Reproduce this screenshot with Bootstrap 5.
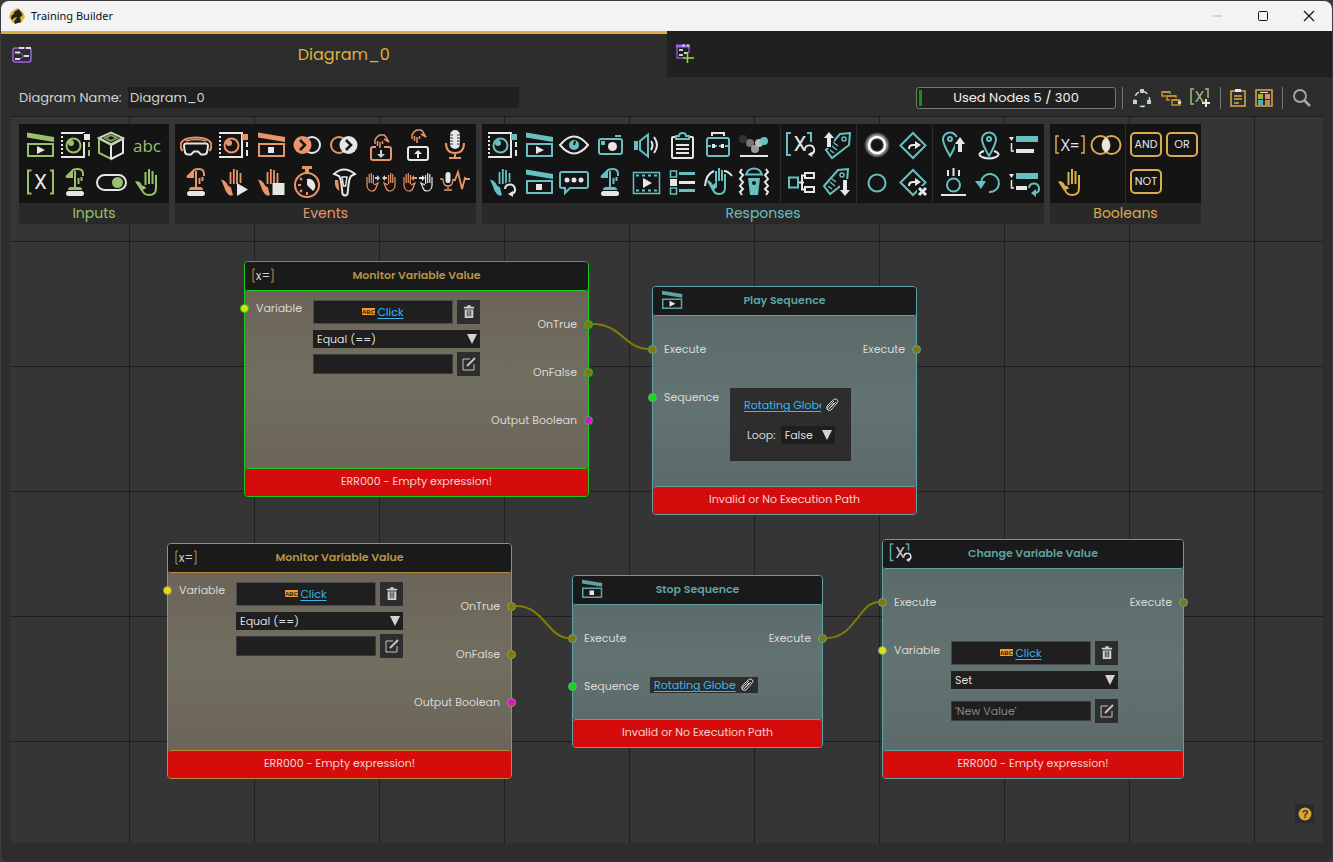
<!DOCTYPE html>
<html lang="en" data-bs-theme="dark">
<head>
<meta charset="utf-8">
<meta name="viewport" content="width=device-width, initial-scale=1">
<title>Training Builder</title>
<link href="https://cdn.jsdelivr.net/npm/bootstrap@5.3.0/dist/css/bootstrap.min.css" rel="stylesheet">
<style>
:root{--ink:#e6e6e6;--green:#9ac06b;--orange:#e9956a;--teal:#67bfc1;--gold:#d9ab4c}
body{font-family:Poppins,Inter,sans-serif;font-size:11px;line-height:16px;color:#d2d2d2;background:#3c3a3d}
.app-window{min-height:100vh;padding:1px 1px 0}
.title-bar{height:30px;background:#f3f3f3;color:#111;border-radius:8px 8px 0 0;font:11px/30px "Noto Sans","Open Sans",sans-serif}
.title-bar .app-name{margin-left:6px}
.title-bar button{width:46px;height:30px;background:none;border:0;padding:0;display:grid;place-items:center}
.work{background:#2d2d2d;border-radius:0 0 8px 8px}
.tab-strip{height:46px;background:#202020}
.tab-on{width:50%;background:#2d2d2d;border:0;border-top:3px solid #dfb13a;color:#dfb13a;font-size:16px;padding:0 11px 2px}
.bare{background:none;border:0;padding:0;color:inherit;line-height:0}
.tool-bar{height:39px;padding:2px 20px 0 18px}
.tool-bar label{font-size:13px;width:109px}
.name-box{width:391px;height:21px;background:#202020;border:0;color:#d2d2d2;font-size:13px;padding:0 2px}
.meter{width:200px;height:22px;background:#202020;border:1px solid #777;border-radius:3px;padding:2px;font-size:13px;line-height:16px;color:#f2f2f2}
.meter .bar{height:16px;background:#0a9a0a}
.meter .cap{position:absolute;inset:2px 0}
.tool-icons{gap:9px;margin-left:6px}
.rule{width:1px;height:22px;background:#777}
.canvas{margin:0 9px 19px;min-height:727px;padding:8px 9px;background-color:#353535;
 background-image:linear-gradient(#1f1f1f 1px,transparent 1px),linear-gradient(90deg,#1f1f1f 1px,transparent 1px);
 background-size:125px 125px;background-position:0 0,119px 0}
.palette{background:#292929;font-size:14px;line-height:21px}
.palette-row{gap:6px}
.groups{background:#141414}
.set{display:grid;grid-auto-flow:column;grid-template-rows:37px 37px;grid-auto-columns:36px;padding:2px 1px 3px 2px;height:79px}
.set + .set{border-left:1px solid #2c2c2c}
.set.roomy{grid-auto-columns:37px;padding-right:3px}
.set.long{padding-right:8px}
.set.four{width:150px}
.set button{display:grid;place-items:center}
.set svg{width:32px;height:32px}
.c-green{color:var(--green)}.c-orange{color:var(--orange)}.c-teal{color:var(--teal)}.c-gold{color:var(--gold)}
svg{overflow:visible}
symbol,.ic{fill:none;stroke-width:2}
.a{stroke:currentColor}.af{fill:currentColor;stroke:none}
.w{stroke:var(--ink)}.wf{fill:var(--ink);stroke:none}
.gate{width:32px;height:25px;border:2px solid var(--gold);border-radius:5px;color:var(--ink);font-size:11px;line-height:21px;text-align:center}
.node{position:absolute;border:1px solid var(--edge);border-radius:4px;--edge:#5ea3a3;--face:#5e6e6df2;--face2:#657674f2;color:#d8d8d8}
.node.warm{--edge:#b38c40;--face:#6f675bf2;--face2:#747262f2}
.node.picked{--edge:#18c81b}
.node-head{height:29px;background:#1a1a1a;border-bottom:1px solid var(--edge);border-radius:3px;font-weight:600;color:#5ea3a3;padding:0 6px 2px}
.warm .node-head{color:#b9924a}
.node-head svg{width:24px;height:24px}
.node-head .ttl{margin-right:24px}
.node-body{background:linear-gradient(var(--face),var(--face2) 50%,var(--face))}
.node-err{height:28px;background:#d60c0c;border-top:1px solid var(--edge);border-radius:3px;line-height:25px;text-align:center;color:#efd3d0}
.port-in,.port-out{display:flex;align-items:center;gap:7px;height:48px;white-space:nowrap}
.port-in{margin-left:-5px}.port-out{margin-right:-5px;justify-content:flex-end}
.port-in i,.port-out i{width:9px;height:9px;border-radius:50%;border:1px solid var(--edge);background:var(--dot,#7d7a12);flex:none}
.ins{width:68px;padding-top:9px}.ins.wide{width:77px}.outs{padding-top:9px}
.warm .ins .port-in{height:16px}
.ctl{width:167px;padding-top:9px}
.ctl .pick{margin:6px 0 4px}
.ctl.low{padding-top:72px}
.ctl.low .pick{margin-bottom:10px}
.slot{height:24px;background:#1f1f1f;border:1px solid #4a4a4a;display:flex;align-items:center;justify-content:center;gap:2px}
.slot a,.ref a{color:#35b9ee;text-decoration:underline;text-underline-offset:2px}
.sq{width:23px;height:24px;background:#2d2d2d;border:0;padding:0;display:grid;place-items:center;flex:none}
.node .pick{height:18px;border:0;border-radius:0;background-color:#1f1f1f;color:#dedede;font-size:11px;line-height:18px;padding:0 18px 0 4px;background-position:right 3px center;background-size:10px 10px;
 background-image:url("data:image/svg+xml,%3csvg xmlns='http://www.w3.org/2000/svg' viewBox='0 0 10 10'%3e%3cpath d='M0 0h10L5 10z' fill='%23d2d2d2'/%3e%3c/svg%3e")}
.field{height:20px;background:#1f1f1f;border:1px solid #3a3a3a;color:#ddd;font-size:11px;padding:0 3px;min-width:0}
.field::placeholder{color:#868686;opacity:1}
.ref-wrap{margin-top:72px}
.ref{background:#2d2d2d}
.loop-card{width:121px;height:73px;padding:9px 0 0 14px}
.loop-row{margin:13px 0 0 3px;gap:5px}
.loop-row .pick{width:54px}
.clip-link{width:77px;overflow:hidden;white-space:nowrap;flex:none}
.help{position:absolute;right:9px;bottom:20px;width:19px;height:19px;background:#2a2a2a;display:grid;place-items:center}
</style>
</head>
<body>
<svg width="0" height="0" class="position-absolute" aria-hidden="true">
<symbol id="roof" viewBox="0 0 32 32"><path class="af" d="M4 3.500L31 8v5L4 8.500z"/><path class="a" d="M5 15h25v12H5z"/></symbol>
<symbol id="clapplay" viewBox="0 0 32 32"><use href="#roof"/><path class="wf" d="M14 17l8 4-8 4z"/></symbol>
<symbol id="clapstop" viewBox="0 0 32 32"><use href="#roof"/><path class="wf" d="M14 18h6v6h-6z"/></symbol>
<symbol id="safe" viewBox="0 0 32 32"><path class="w" d="M2 4h24M2 28h24M25 3v26"/><path class="w" stroke-dasharray="2 2" d="M3 3v26"/><circle class="a" cx="14.500" cy="16.500" r="7"/><circle class="af" cx="12" cy="14" r="3"/></symbol>
<symbol id="safe1" viewBox="0 0 32 32"><use href="#safe"/><path fill="#141414" d="M24 4h8v9h-8z"/><path class="wf" d="M25 5h6v6h-6z"/><path class="a" d="M30 13v5M30 21v6"/></symbol>
<symbol id="safe2" viewBox="0 0 32 32"><use href="#safe"/><path class="af" d="M25 5h6v6h-6z"/><path class="w" d="M30 13v5M30 21v6"/></symbol>
<symbol id="cube" viewBox="0 0 32 32"><path class="a" d="M16 17v13L4 24V9.500l12 6"/><path class="w" d="M16 30l12-6V9.500l-12 6.500v14"/><path d="M4 9l12-5.500L28 9l-12 6.500z" stroke="#c0d3a8"/><path d="M10 9l6-3 6 3-6 3z" stroke="#7f9c5c"/></symbol>
<symbol id="brk" viewBox="0 0 32 32"><path class="a" d="M8.500 4.500H5v23h3.500M27 4.500h3v23h-3"/></symbol>
<symbol id="press" viewBox="0 0 32 32"><path class="a" stroke-width="2" d="M7 11l7-7q2-1 5-1 5 0 5 5v2M7 11h6M16 5v16M19.500 12v6M22.500 11v4"/><path class="af" d="M8 11l6-7v8h-6z"/><path class="af" d="M9 24q0-3 3-3h8q3 0 3 3z"/><rect class="wf" x="7" y="25" width="18" height="5" rx="2.500"/></symbol>
<symbol id="toggle" viewBox="0 0 32 32"><rect class="w" x="2" y="9" width="29" height="15" rx="7.500"/><circle class="af" cx="22.500" cy="16.500" r="5.500"/></symbol>
<symbol id="hand" viewBox="0 0 32 32"><path class="a" d="M14.500 19V6M18 18V3M21.500 18V5M25 9v13q0 7-7 7-5 0-7-5l-5-8"/><path class="af" d="M4 15.500q5-1 7 4l3 1 1 2-5 2z"/></symbol>
<symbol id="fingers" viewBox="0 0 32 32"><path class="a" stroke-width="1.800" d="M13.500 18V6M16.800 18V3M20 18V4M23.500 17V7"/><path class="af" d="M4 13.500q5 1 7 6l3 2q1 4 2 8h-3q-4-2-6-9z"/></symbol>
<symbol id="handplay" viewBox="0 0 32 32"><use href="#fingers"/><path class="wf" d="M20 17l11 6.500L20 30z"/></symbol>
<symbol id="handstop" viewBox="0 0 32 32"><use href="#fingers"/><path class="wf" d="M18.500 17h12v12h-12z"/></symbol>
<symbol id="vr" viewBox="0 0 32 32"><path class="a" d="M2.500 22Q0 19 1 14q3-5.500 15-5.500T31 14q1 5-1.500 8"/><path class="a" stroke-width="1.500" d="M6 12q10-3 20 0"/><path class="w" d="M6 14.500h20q2 0 2 3l-1 6q-1 2-3 2h-3l-3-3h-4l-3 3H8q-2 0-3-2l-1-6q0-3 2-3z"/></symbol>
<symbol id="chev1" viewBox="0 0 32 32"><circle class="w" cx="21" cy="16" r="8"/><circle class="af" cx="11.500" cy="16" r="9"/><path d="M9 11l5 5-5 5" stroke="#141414" stroke-width="2.500"/></symbol>
<symbol id="chev2" viewBox="0 0 32 32"><circle class="a" cx="11" cy="16" r="8"/><circle class="wf" cx="20.500" cy="16" r="9"/><path d="M18 11l5 5-5 5" stroke="#141414" stroke-width="2.500"/></symbol>
<symbol id="pinch" viewBox="0 0 32 32"><path class="a" stroke-width="1.500" d="M10 13V9q2-4 5-5h4q2 1 3 4l2 3-5-3M12.500 10v5M15 11v6M17.500 10v3"/></symbol>
<symbol id="grab" viewBox="0 0 32 32"><rect class="a" x="6" y="18" width="20" height="13" rx="2"/><path fill="#141414" d="M11 16h8v4h-8z"/><use href="#pinch" y="2"/><path fill="#ccc" d="M15 21h2v4h3l-4 4-4-4h3z"/></symbol>
<symbol id="drop" viewBox="0 0 32 32"><use href="#pinch" y="-3"/><rect class="w" x="6" y="18" width="20" height="13" rx="2"/><path class="wf" d="M15 29h2v-4h3l-4-4-4 4h3z"/></symbol>
<symbol id="mic" viewBox="0 0 32 32"><rect class="wf" x="11" y="1" width="10" height="19" rx="5"/><path d="M11 6h3M18 6h3M11 9h3M18 9h3M11 12h3M18 12h3M11 15h3M18 15h3" stroke="#333" stroke-width="1"/><path class="a" d="M7 14q0 10 9 10t9-10M16 24v5M10 29h12"/></symbol>
<symbol id="timer" viewBox="0 0 32 32"><circle class="a" cx="16" cy="19" r="12"/><path class="af" d="M11 0h10v3h-3v4h-4V3h-3z"/><path class="wf" d="M16 13a7 7 0 0 1 6 12l-6-6z"/><path class="a" d="M16 29v-3M7 19h3M9 12l2 2M9 26l2-2"/></symbol>
<symbol id="bolt" viewBox="0 0 32 32"><path class="w" d="M6 8q10-9 21 0l-4 2q-2 3-2.500 9l-1 9q-2.500 3-5 0l-1-9Q13 13 11 10z"/><path class="w" stroke-width="1.500" d="M14 11l1.500 9h2l1.500-9z"/><path class="af" d="M7 14h3l1.500 11Q6 22 7 14z"/></symbol>
<symbol id="minihand" viewBox="0 0 16 32"><path class="a" stroke-width="1.200" d="M2 11v9q1 5 5 5 3 0 4-3l2-5-4 2M4.200 17V8M6.300 17V7M8.400 18V9"/></symbol>
<symbol id="handsin" viewBox="0 0 32 32"><use href="#minihand" width="16" height="32"/><use href="#minihand" width="16" height="32" transform="matrix(-1 0 0 1 32 0)"/><path fill="#ccc" d="M10 11h2V9l3 3-3 3v-2h-2zM22 11h-2V9l-3 3 3 3v-2h2z"/></symbol>
<symbol id="handsout" viewBox="0 0 32 32"><use href="#minihand" width="16" height="32"/><g color="#e6e6e6"><use href="#minihand" width="16" height="32" transform="matrix(-1 0 0 1 32 0)"/></g><path class="af" d="M15 11h-3V9l-3 3 3 3v-2h3z"/><path class="wf" d="M17 11h3V9l3 3-3 3v-2h-3z"/></symbol>
<symbol id="micwave" viewBox="0 0 32 32"><rect class="wf" x="6.500" y="6" width="5" height="11" rx="2.500"/><path class="a" stroke-width="1.300" d="M4 13q0 7 5 7t5-7M9 20v4M5 24h8M1 13h3"/><path class="a" stroke-width="1.800" d="M14 14h2l3-8 4 17 3-11 1 1h4"/></symbol>
<symbol id="eye" viewBox="0 0 32 32"><path class="w" d="M2 16q14-17 28 0-14 17-28 0z"/><circle class="af" cx="16" cy="16" r="5"/><path d="M16 16l1-4" stroke="#141414"/></symbol>
<symbol id="camera" viewBox="0 0 32 32"><rect class="a" x="5" y="10" width="23" height="15" rx="2"/><path class="af" d="M7 12h4v4H7zM21 6h6v2h-6z"/><circle class="wf" cx="18.500" cy="17.500" r="4.500"/></symbol>
<symbol id="speaker" viewBox="0 0 32 32"><path class="af" d="M4 12h4v9H4z"/><path class="a" d="M10 12l8-6.500v22L10 21z"/><path class="w" d="M21 12q3 4 0 9M24 8q6 8 0 16"/></symbol>
<symbol id="clip" viewBox="0 0 32 32"><rect class="w" x="6" y="8" width="21" height="21" rx="1"/><path class="w" d="M10 16h13M10 20h13M10 24h13"/><path class="a" d="M10 10V7h3q0-3 3.500-3T20 7h3v3z" fill="#141414"/></symbol>
<symbol id="case" viewBox="0 0 32 32"><path class="w" d="M10 7V4h12v3"/><rect class="a" x="5" y="9" width="22" height="18" rx="2"/><path class="a" stroke-dasharray="4 2" d="M5 17h22"/><path class="wf" d="M10 15h3v4h-3zM19 15h3v4h-3z"/></symbol>
<symbol id="orbs" viewBox="0 0 32 32"><circle cx="5" cy="10" r="4" fill="#333"/><circle cx="12" cy="14" r="4" fill="#777"/><circle cx="17" cy="20" r="4" fill="#999"/><circle cx="21" cy="14" r="4" fill="#bbb"/><circle class="af" cx="26" cy="12" r="4"/><path class="w" d="M2 27h28"/></symbol>
<symbol id="spin" viewBox="0 0 14 14"><path class="w" d="M2 6a5 5 0 1 1 7 5"/><path class="wf" d="M5 11l5-3v6z"/></symbol>
<symbol id="handspin" viewBox="0 0 32 32"><use href="#fingers"/><circle cx="24" cy="24" r="8" fill="#141414"/><use href="#spin" x="17" y="17" width="14" height="14"/></symbol>
<symbol id="chat" viewBox="0 0 32 32"><path class="a" d="M4 6h24q2 0 2 2v12q0 2-2 2H12l-5 5v-5H4q-2 0-2-2V8q0-2 2-2z"/><circle class="wf" cx="9" cy="14" r="2.500"/><circle class="wf" cx="16" cy="14" r="2.500"/><circle class="wf" cx="23" cy="14" r="2.500"/></symbol>
<symbol id="film" viewBox="0 0 32 32"><path class="a" stroke-width="1.500" d="M3.500 6.500h26v21h-26z"/><path class="a" stroke-dasharray="3 3" d="M6 9.500h22M6 24.500h22"/><path class="wf" d="M13 12l9 5-9 5z"/></symbol>
<symbol id="list" viewBox="0 0 32 32"><path class="a" stroke-width="1.500" d="M4.500 5h6v6h-6zM4.500 22h6v6h-6z"/><path class="wf" d="M4 13h7v7H4zM13 15h16v3H13z"/><path class="af" d="M13 6h16v3H13zM13 23h16v3H13z"/></symbol>
<symbol id="swipe" viewBox="0 0 32 32"><path class="w" d="M3 20Q4 8 12 5M22 5q4 0 8 5"/><path class="a" d="M14 16V5M17 15V2M20 15V4M23 8v14q0 6-6 6-4 0-6-4L6 15"/><path class="af" d="M5 14q4 1 6 5l4-4v6l-4 4z"/></symbol>
<symbol id="buzz" viewBox="0 0 32 32"><path class="w" d="M4 3l-2 3 3 3-3 4 3 3-3 4 3 3-3 3 2 3M28 3l2 3-3 3 3 4-3 3 3 4-3 3 3 3-2 3"/><path class="a" d="M8 8.500q2-6 8-6t8 6z"/><path class="af" d="M10 12h12l-2 17h-8z"/><circle cx="16" cy="17" r="2" fill="#141414"/></symbol>
<symbol id="varspin" viewBox="0 0 32 32"><path class="a" d="M6 4H2v22h4M22 4h4v9"/><use href="#spin" x="18" y="15" width="13" height="13"/></symbol>
<symbol id="tag" viewBox="0 0 32 32"><path class="a" d="M5 21L19 5l10-1-1 12-17 13z"/><circle class="a" cx="23" cy="10" r="2" stroke-width="1.500"/><path class="a" stroke-width="1.500" d="M11 17l5 4M13 14l4 3M9 21l4 3"/></symbol>
<symbol id="tagup" viewBox="0 0 32 32"><use href="#tag"/><path d="M3 2h10v10l-3 7H3z" fill="#141414"/><path class="wf" d="M8 3l5 6h-3v9H6V9H3z"/></symbol>
<symbol id="tagdown" viewBox="0 0 32 32"><use href="#tag" x="-2" y="-1"/><path d="M19 13h9v17h-9z" fill="#141414"/><path class="wf" d="M24 30l5-6h-3V14h-4v10h-3z"/></symbol>
<symbol id="glow" viewBox="0 0 32 32"><circle cx="16" cy="16" r="9" stroke="#444" stroke-width="7"/><circle cx="16" cy="16" r="9" stroke="#888" stroke-width="4"/><circle cx="16" cy="16" r="8" stroke="#fff" stroke-width="2.500"/></symbol>
<symbol id="ring" viewBox="0 0 32 32"><circle class="a" cx="16" cy="17" r="8.500"/></symbol>
<symbol id="dia" viewBox="0 0 32 32"><path class="a" d="M16 4l12.500 12.500L16 29 3.500 16.500z"/><path class="w" d="M12 20q0-4 4-4h3"/><path class="wf" d="M18 12l6 4-6 4z"/></symbol>
<symbol id="diax" viewBox="0 0 32 32"><use href="#dia"/><path d="M20 20h12v12H20z" fill="#141414"/><path class="w" stroke-width="3" d="M22 22l7 7M29 22l-7 7"/></symbol>
<symbol id="pin" viewBox="0 0 32 32"><path class="a" d="M16 27Q9 15 9 10a7 6.500 0 0 1 14 0q0 5-7 17z"/><circle class="a" cx="16" cy="10" r="2"/></symbol>
<symbol id="pinup" viewBox="0 0 32 32"><use href="#pin" x="-3"/><path d="M18 8h10v16H18z" fill="#141414"/><path class="wf" d="M23 8l5 7h-3v8h-4v-8h-3z"/></symbol>
<symbol id="pinring" viewBox="0 0 32 32"><path class="w" d="M11 22q-8 3-2 6 7 3 14 0 6-3-2-6"/><use href="#pin"/></symbol>
<symbol id="tree" viewBox="0 0 32 32"><path class="af" d="M7 7h22v6H7z"/><path class="wf" d="M0 8h5l-2.500 4zM7 20h18v4H7z"/><path class="w" stroke-width="1.500" d="M2.500 14v8H5"/></symbol>
<symbol id="treespin" viewBox="0 0 32 32"><path class="af" d="M7 7h22v6H7z"/><path class="wf" d="M0 8h5l-2.500 4zM7 20h11v4H7z"/><path class="w" stroke-width="1.500" d="M2.500 14v8H5"/><path class="a" d="M20 22a5 5 0 1 1 7 5"/><path class="af" d="M22 27l5-4v8z"/></symbol>
<symbol id="flow" viewBox="0 0 32 32"><path class="a" d="M4 11.500h9v10H4z"/><path class="w" d="M14 16.500h5M19 9.500h-2v14h2M20 7h9v5h-9zM20 21h9v5h-9z"/></symbol>
<symbol id="fall" viewBox="0 0 32 32"><circle class="a" cx="16.500" cy="19" r="6.500"/><path class="w" d="M4 29h25M11 4v6M16.500 2v8M22 4v6"/></symbol>
<symbol id="undo" viewBox="0 0 32 32"><path class="a" d="M8 16a9 9 0 1 1 8 10"/><path class="af" d="M2 15h11l-5 8z"/></symbol>
<symbol id="venn" viewBox="0 0 32 32"><circle class="a" cx="10.500" cy="16" r="9"/><circle class="a" cx="21.500" cy="16" r="9"/><path class="wf" d="M16 8.500q8 7.500 0 15-8-7.500 0-15z"/></symbol>
<symbol id="trash" viewBox="0 0 14 16"><path fill="#d2d2d2" d="M1 2h4V0h4v2h4v2H1zM2 5h10v10H2z"/><path d="M5 6v7M7 6v7M9 6v7" stroke="#2d2d2d" stroke-width="1"/></symbol>
<symbol id="pen" viewBox="0 0 14 14"><path d="M8 2H1v11h11V7" stroke="#c4c4c4" stroke-width="1"/><path d="M5 9l8-8" stroke="#c4c4c4"/></symbol>
<symbol id="paper" viewBox="0 0 14 14"><path d="M9 3l-6 6q-1 2 0 3t3 0l6-7q2-2 0-3.500t-4 .5l-6 6q-1 3 1 4M9 5l-5 6M11 4L5 10" stroke="#d2d2d2" stroke-width="1"/></symbol>
<symbol id="abcchip" viewBox="0 0 13 8"><path fill="#f09a35" d="M0 0h13v7H0z"/><text x="6.500" y="6" text-anchor="middle" font-family="Liberation Sans,sans-serif" font-weight="700" font-size="6" fill="#2a1a05">ABC</text></symbol>
</svg>

<div class="app-window d-flex flex-column">
<header class="title-bar d-flex align-items-center">
 <svg class="ms-2" width="16" height="16" viewBox="0 0 16 16" aria-hidden="true"><path fill="#e0b030" d="M8 0l6 4 2 5-4 6H4L0 9l2-5z"/><path fill="#24221e" d="M5 4l5-3 1 2q3 3 2 5l-2 1 1 5-6 2q-2-3 1-5l1-2-3 1-2 2-1-2q0-3 3-4z"/></svg>
 <span class="app-name flex-grow-1">Training Builder</span>
 <button type="button" aria-label="Minimize"><svg width="10" height="10"><path d="M0 5h10" stroke="#bbb"/></svg></button>
 <button type="button" aria-label="Maximize"><svg width="10" height="10"><rect x=".5" y=".5" width="9" height="9" rx="1" fill="none" stroke="#111"/></svg></button>
 <button type="button" aria-label="Close"><svg width="10" height="10"><path d="M0 0l10 10M10 0L0 10" stroke="#111" stroke-width="1.200"/></svg></button>
</header>
<main class="work flex-grow-1 d-flex flex-column">
 <div class="tab-strip d-flex" role="tablist">
  <button type="button" role="tab" class="tab-on d-flex align-items-center" aria-selected="true">
   <svg width="20" height="16" viewBox="0 0 20 16" fill="none" aria-hidden="true"><rect x="1" y="1" width="18" height="14" rx="2.500" stroke="#a55cf0" stroke-width="1.500"/><path d="M7 1h5M14 1h5M3 5.500h5M3 12h5M12 9h5" stroke="#ddd" stroke-width="2"/><path d="M8 5.500l4 3.500-4 3" stroke="#a55cf0"/></svg>
   <span class="flex-grow-1 text-center">Diagram_0</span></button>
  <button type="button" class="bare ms-2" aria-label="New diagram"><svg width="22" height="20" viewBox="0 0 22 20" fill="none"><path d="M14 9V2H2v12h8" stroke="#8d4bd0" stroke-width="1.500"/><path d="M1 2h14" stroke="#a55cf0" stroke-width="3"/><path d="M7 1.500h3M12 1.500h2M4 6h4M4 11h4M9 9h3" stroke="#ccc" stroke-width="2"/><path d="M12.500 8v11M8 14h11" stroke="#86e04c" stroke-width="1.500"/></svg></button>
 </div>
 <div class="tool-bar d-flex align-items-center">
  <label for="dname">Diagram Name:</label>
  <input id="dname" class="name-box" type="text" value="Diagram_0">
  <div class="meter ms-auto position-relative"><div class="bar" style="width:1.670%"></div><div class="cap text-center">Used Nodes 5 / 300</div></div>
  <div class="tool-icons d-flex align-items-center">
   <span class="rule"></span>
   <button type="button" class="bare" aria-label="Arrange"><svg width="20" height="20" fill="none"><circle cx="10" cy="11" r="7.500" stroke="#ddd" stroke-width="1.500" stroke-dasharray="5 4"/><path fill="#b4d5dc" d="M8 1h4v4H8zM1 12h4v4H1zM15 12h4v4h-4z"/></svg></button>
   <button type="button" class="bare" aria-label="Layers"><svg width="20" height="20" viewBox="0 0 20 20" fill="none" stroke="#bd9130" stroke-width="1.500"><path d="M5 8H1V4h8v2M9 12H6V8h9v2M11 12h8v5h-8z"/><path d="M1 4h8M6 8h9M11 12h8" stroke-width="2"/><circle cx="18.500" cy="14.500" r="1" stroke="#ddd"/></svg></button>
   <button type="button" class="bare c-green" aria-label="Add variable"><svg class="ic" width="21" height="21" viewBox="0 0 21 21"><path class="a" stroke-width="1.500" d="M4 2H1v15h3M15 2h3v9"/><text x="9.500" y="15" text-anchor="middle" font-family="Roboto,sans-serif" font-size="15" fill="currentColor">X</text><path class="w" d="M16 12v8M12 16h8"/></svg></button>
   <span class="rule"></span>
   <button type="button" class="bare c-gold" aria-label="Notes"><svg class="ic" width="16" height="20" viewBox="0 0 16 20"><path class="a" d="M1 3h14v15H1zM4 8h8M4 11h8M4 15h5" stroke-width="1.500"/><path class="wf" d="M5 1h6v3H5z"/></svg></button>
   <button type="button" class="bare c-gold" aria-label="Board"><svg class="ic" width="18" height="20" viewBox="0 0 18 20"><path class="a" stroke-width="1.500" d="M1 2h16v16H1z"/><path class="w" d="M5 4.500h8" stroke-width="1"/><path fill="#9ab64a" d="M3 6h5v5H3z"/><path fill="#e58a6a" d="M10 6h5v5h-5z"/><path fill="#55b0b5" d="M3 12h5v5H3z"/><path fill="#b9924a" d="M10 12h5v5h-5z"/></svg></button>
   <span class="rule"></span>
   <button type="button" class="bare" aria-label="Search"><svg width="20" height="20" fill="none" stroke="#a8a8a8"><circle cx="8" cy="8" r="6" stroke-width="1.800"/><path d="M12 12l6 6" stroke-width="2.500"/></svg></button>
  </div>
 </div>

 <section class="canvas position-relative flex-grow-1">
  <div class="palette-row d-flex align-items-start">
   <div class="palette c-green"><div class="groups d-flex"><div class="set four">
    <button class="bare" type="button" aria-label="Play sequence"><svg class="ic"><use href="#clapplay"/></svg></button>
    <button class="bare" type="button" aria-label="Variable"><svg class="ic" viewBox="0 0 32 32"><use href="#brk"/><text x="17.500" y="23" text-anchor="middle" font-family="Roboto,sans-serif" font-size="20" fill="#e6e6e6">X</text></svg></button>
    <button class="bare" type="button" aria-label="Object"><svg class="ic"><use href="#safe1"/></svg></button>
    <button class="bare" type="button" aria-label="Press"><svg class="ic"><use href="#press"/></svg></button>
    <button class="bare" type="button" aria-label="Cube"><svg class="ic"><use href="#cube"/></svg></button>
    <button class="bare" type="button" aria-label="Toggle"><svg class="ic"><use href="#toggle"/></svg></button>
    <button class="bare" type="button" aria-label="Text"><svg class="ic" viewBox="0 0 32 32"><text x="16" y="23" text-anchor="middle" font-family="Open Sans,sans-serif" font-size="17" fill="currentColor">abc</text></svg></button>
    <button class="bare" type="button" aria-label="Hand"><svg class="ic"><use href="#hand"/></svg></button>
   </div></div><div class="text-center">Inputs</div></div>

   <div class="palette c-orange"><div class="groups d-flex"><div class="set roomy">
    <button class="bare" type="button" aria-label="Headset"><svg class="ic"><use href="#vr"/></svg></button>
    <button class="bare" type="button" aria-label="Press"><svg class="ic"><use href="#press"/></svg></button>
    <button class="bare" type="button" aria-label="Object"><svg class="ic"><use href="#safe2"/></svg></button>
    <button class="bare" type="button" aria-label="Hand play"><svg class="ic"><use href="#handplay"/></svg></button>
    <button class="bare" type="button" aria-label="Sequence end"><svg class="ic"><use href="#clapstop"/></svg></button>
    <button class="bare" type="button" aria-label="Hand stop"><svg class="ic"><use href="#handstop"/></svg></button>
    <button class="bare" type="button" aria-label="Enter"><svg class="ic"><use href="#chev1"/></svg></button>
    <button class="bare" type="button" aria-label="Timer"><svg class="ic"><use href="#timer"/></svg></button>
    <button class="bare" type="button" aria-label="Exit"><svg class="ic"><use href="#chev2"/></svg></button>
    <button class="bare" type="button" aria-label="Bolt"><svg class="ic"><use href="#bolt"/></svg></button>
    <button class="bare" type="button" aria-label="Grab"><svg class="ic"><use href="#grab"/></svg></button>
    <button class="bare" type="button" aria-label="Hands in"><svg class="ic"><use href="#handsin"/></svg></button>
    <button class="bare" type="button" aria-label="Release"><svg class="ic"><use href="#drop"/></svg></button>
    <button class="bare" type="button" aria-label="Hands out"><svg class="ic"><use href="#handsout"/></svg></button>
    <button class="bare" type="button" aria-label="Microphone"><svg class="ic"><use href="#mic"/></svg></button>
    <button class="bare" type="button" aria-label="Voice level"><svg class="ic"><use href="#micwave"/></svg></button>
   </div></div><div class="text-center">Events</div></div>

   <div class="palette c-teal"><div class="groups d-flex"><div class="set long">
    <button class="bare" type="button" aria-label="Object"><svg class="ic"><use href="#safe2"/></svg></button>
    <button class="bare" type="button" aria-label="Hand rotate"><svg class="ic"><use href="#handspin"/></svg></button>
    <button class="bare" type="button" aria-label="Play sequence"><svg class="ic"><use href="#clapplay"/></svg></button>
    <button class="bare" type="button" aria-label="Stop sequence"><svg class="ic"><use href="#clapstop"/></svg></button>
    <button class="bare" type="button" aria-label="Visibility"><svg class="ic"><use href="#eye"/></svg></button>
    <button class="bare" type="button" aria-label="Message"><svg class="ic"><use href="#chat"/></svg></button>
    <button class="bare" type="button" aria-label="Camera"><svg class="ic"><use href="#camera"/></svg></button>
    <button class="bare" type="button" aria-label="Press"><svg class="ic"><use href="#press"/></svg></button>
    <button class="bare" type="button" aria-label="Sound"><svg class="ic"><use href="#speaker"/></svg></button>
    <button class="bare" type="button" aria-label="Video"><svg class="ic"><use href="#film"/></svg></button>
    <button class="bare" type="button" aria-label="Clipboard"><svg class="ic"><use href="#clip"/></svg></button>
    <button class="bare" type="button" aria-label="List"><svg class="ic"><use href="#list"/></svg></button>
    <button class="bare" type="button" aria-label="Toolbox"><svg class="ic"><use href="#case"/></svg></button>
    <button class="bare" type="button" aria-label="Swipe"><svg class="ic"><use href="#swipe"/></svg></button>
    <button class="bare" type="button" aria-label="Motion"><svg class="ic"><use href="#orbs"/></svg></button>
    <button class="bare" type="button" aria-label="Vibrate"><svg class="ic"><use href="#buzz"/></svg></button>
   </div><div class="set">
    <button class="bare" type="button" aria-label="Change variable"><svg class="ic" viewBox="0 0 32 32"><text x="15" y="22" text-anchor="middle" font-family="Roboto,sans-serif" font-size="20" fill="#e6e6e6">X</text><use href="#varspin"/></svg></button>
    <button class="bare" type="button" aria-label="Flow"><svg class="ic"><use href="#flow"/></svg></button>
    <button class="bare" type="button" aria-label="Tag up"><svg class="ic"><use href="#tagup"/></svg></button>
    <button class="bare" type="button" aria-label="Tag down"><svg class="ic"><use href="#tagdown"/></svg></button>
   </div><div class="set">
    <button class="bare" type="button" aria-label="Highlight"><svg class="ic"><use href="#glow"/></svg></button>
    <button class="bare" type="button" aria-label="Ring"><svg class="ic"><use href="#ring"/></svg></button>
    <button class="bare" type="button" aria-label="Direction"><svg class="ic"><use href="#dia"/></svg></button>
    <button class="bare" type="button" aria-label="Clear direction"><svg class="ic"><use href="#diax"/></svg></button>
   </div><div class="set">
    <button class="bare" type="button" aria-label="Pin up"><svg class="ic"><use href="#pinup"/></svg></button>
    <button class="bare" type="button" aria-label="Drop to floor"><svg class="ic"><use href="#fall"/></svg></button>
    <button class="bare" type="button" aria-label="Location"><svg class="ic"><use href="#pinring"/></svg></button>
    <button class="bare" type="button" aria-label="Undo"><svg class="ic"><use href="#undo"/></svg></button>
    <button class="bare" type="button" aria-label="Tree"><svg class="ic"><use href="#tree"/></svg></button>
    <button class="bare" type="button" aria-label="Reset tree"><svg class="ic"><use href="#treespin"/></svg></button>
   </div></div><div class="text-center">Responses</div></div>

   <div class="palette c-gold"><div class="groups d-flex"><div class="set">
    <button class="bare" type="button" aria-label="Monitor variable"><svg class="ic" viewBox="0 0 32 32"><path class="a" stroke-width="1.500" d="M5 7H2v17h3M27 7h3v17h-3"/><text x="16" y="22" text-anchor="middle" font-family="Open Sans,sans-serif" font-size="16" fill="#e6e6e6">X=</text></svg></button>
    <button class="bare" type="button" aria-label="Hand"><svg class="ic"><use href="#hand"/></svg></button>
    <button class="bare" type="button" aria-label="Overlap"><svg class="ic"><use href="#venn"/></svg></button>
   </div><div class="set">
    <button class="bare" type="button"><span class="gate">AND</span></button>
    <button class="bare" type="button"><span class="gate">NOT</span></button>
    <button class="bare" type="button"><span class="gate">OR</span></button>
   </div></div><div class="text-center">Booleans</div></div>
  </div>

  <article class="node warm picked" style="left:234px;top:145px;width:345px">
   <div class="node-head d-flex align-items-center"><svg viewBox="0 0 24 24"><path class="a" fill="none" d="M4 6H2v13h2M20 6h2v13h-2"/><text x="12" y="17" text-anchor="middle" font-size="12" fill="#cfcfcf" font-weight="400">x=</text></svg><span class="ttl flex-grow-1 text-center">Monitor Variable Value</span></div>
   <div class="node-body d-flex" style="min-height:177px">
    <div class="ins"><div class="port-in" style="--dot:#d8e010"><i></i>Variable</div></div>
    <div class="ctl d-flex flex-column">
     <div class="d-flex gap-1"><div class="slot flex-grow-1"><svg width="13" height="8"><use href="#abcchip"/></svg><a href="#">Click</a></div><button class="sq" type="button" aria-label="Delete"><svg width="12" height="14"><use href="#trash"/></svg></button></div>
     <select class="form-select pick" aria-label="Comparison"><option>Equal (==)</option></select>
     <div class="d-flex gap-1 align-items-center"><input class="field flex-grow-1" type="text" aria-label="Expression"><button class="sq" type="button" aria-label="Edit"><svg width="14" height="14"><use href="#pen"/></svg></button></div>
    </div>
    <div class="outs ms-auto"><div class="port-out">OnTrue<i></i></div><div class="port-out">OnFalse<i></i></div><div class="port-out" style="--dot:#dc0fdc">Output Boolean<i></i></div></div>
   </div>
   <div class="node-err">ERR000 - Empty expression!</div>
  </article>

  <article class="node warm" style="left:157px;top:427px;width:345px">
   <div class="node-head d-flex align-items-center"><svg viewBox="0 0 24 24"><path class="a" fill="none" d="M4 6H2v13h2M20 6h2v13h-2"/><text x="12" y="17" text-anchor="middle" font-size="12" fill="#cfcfcf" font-weight="400">x=</text></svg><span class="ttl flex-grow-1 text-center">Monitor Variable Value</span></div>
   <div class="node-body d-flex" style="min-height:177px">
    <div class="ins"><div class="port-in" style="--dot:#e0e010"><i></i>Variable</div></div>
    <div class="ctl d-flex flex-column">
     <div class="d-flex gap-1"><div class="slot flex-grow-1"><svg width="13" height="8"><use href="#abcchip"/></svg><a href="#">Click</a></div><button class="sq" type="button" aria-label="Delete"><svg width="12" height="14"><use href="#trash"/></svg></button></div>
     <select class="form-select pick" aria-label="Comparison"><option>Equal (==)</option></select>
     <div class="d-flex gap-1 align-items-center"><input class="field flex-grow-1" type="text" aria-label="Expression"><button class="sq" type="button" aria-label="Edit"><svg width="14" height="14"><use href="#pen"/></svg></button></div>
    </div>
    <div class="outs ms-auto"><div class="port-out">OnTrue<i></i></div><div class="port-out">OnFalse<i></i></div><div class="port-out" style="--dot:#dc0fdc">Output Boolean<i></i></div></div>
   </div>
   <div class="node-err">ERR000 - Empty expression!</div>
  </article>

  <article class="node" style="left:642px;top:170px;width:265px">
   <div class="node-head d-flex align-items-center"><svg><use href="#clapplay"/></svg><span class="ttl flex-grow-1 text-center">Play Sequence</span></div>
   <div class="node-body d-flex" style="min-height:170px">
    <div class="ins wide"><div class="port-in"><i></i>Execute</div><div class="port-in" style="--dot:#10dc18"><i></i>Sequence</div></div>
    <div class="ref-wrap"><div class="ref loop-card"><div class="d-flex align-items-center gap-1"><a class="clip-link" href="#">Rotating Globe</a><svg width="14" height="14" class="flex-shrink-0"><use href="#paper"/></svg></div>
     <div class="loop-row d-flex align-items-center"><label for="loop">Loop:</label><select id="loop" class="form-select pick"><option>False</option></select></div></div></div>
    <div class="outs flex-grow-1"><div class="port-out">Execute<i></i></div></div>
   </div>
   <div class="node-err">Invalid or No Execution Path</div>
  </article>

  <article class="node" style="left:562px;top:459px;width:251px">
   <div class="node-head d-flex align-items-center"><svg><use href="#clapstop"/></svg><span class="ttl flex-grow-1 text-center">Stop Sequence</span></div>
   <div class="node-body d-flex" style="min-height:114px">
    <div class="ins wide"><div class="port-in"><i></i>Execute</div><div class="port-in" style="--dot:#10dc18"><i></i>Sequence</div></div>
    <div class="ref-wrap"><div class="ref d-flex align-items-center gap-1 px-1"><a href="#">Rotating Globe</a><svg width="14" height="14"><use href="#paper"/></svg></div></div>
    <div class="outs flex-grow-1"><div class="port-out">Execute<i></i></div></div>
   </div>
   <div class="node-err">Invalid or No Execution Path</div>
  </article>

  <article class="node" style="left:872px;top:423px;width:302px">
   <div class="node-head d-flex align-items-center"><svg class="ic" viewBox="0 0 32 32"><text x="15" y="22" text-anchor="middle" font-family="Roboto,sans-serif" font-size="20" font-weight="400" fill="#cfcfcf">X</text><use href="#varspin"/></svg><span class="ttl flex-grow-1 text-center">Change Variable Value</span></div>
   <div class="node-body d-flex" style="min-height:181px">
    <div class="ins"><div class="port-in"><i></i>Execute</div><div class="port-in" style="--dot:#e0e010"><i></i>Variable</div></div>
    <div class="ctl low d-flex flex-column">
     <div class="d-flex gap-1"><div class="slot flex-grow-1"><svg width="13" height="8"><use href="#abcchip"/></svg><a href="#">Click</a></div><button class="sq" type="button" aria-label="Delete"><svg width="12" height="14"><use href="#trash"/></svg></button></div>
     <select class="form-select pick" aria-label="Operation"><option>Set</option></select>
     <div class="d-flex gap-1 align-items-center"><input class="field flex-grow-1" type="text" placeholder="'New Value'" aria-label="New value"><button class="sq" type="button" aria-label="Edit"><svg width="14" height="14"><use href="#pen"/></svg></button></div>
    </div>
    <div class="outs flex-grow-1"><div class="port-out">Execute<i></i></div></div>
   </div>
   <div class="node-err">ERR000 - Empty expression!</div>
  </article>

  <svg class="position-absolute top-0 start-0 pe-none" width="100%" height="100%" fill="none" stroke="#807d08" stroke-width="2" aria-hidden="true">
   <path d="M583 208c28 0 32 25 56 25M506 490c28 0 32 32 53 32M817 522c28 0 32-36 52-36"/>
  </svg>
  <button type="button" class="bare help" aria-label="Help"><svg width="14" height="14"><circle cx="7" cy="7" r="6.500" fill="#d9a532"/><text x="7" y="11" text-anchor="middle" font-family="Liberation Sans,sans-serif" font-weight="700" font-size="11" fill="#2d2d2d">?</text></svg></button>
 </section>
</main>
</div>
<script src="https://cdn.jsdelivr.net/npm/bootstrap@5.3.0/dist/js/bootstrap.bundle.min.js"></script>
</body>
</html>
